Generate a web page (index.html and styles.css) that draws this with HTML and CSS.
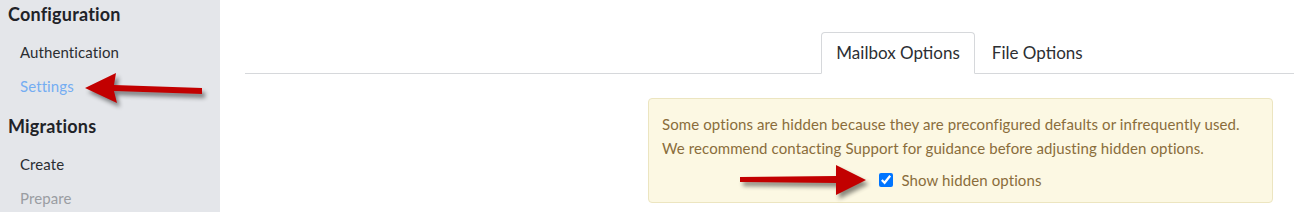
FILE: index.html
```
<html>

<head>
    <link rel="stylesheet" href="styles.css">
</head>

<body>
    <div class="page">
        <div class="sidebar">
            <div class="nav-head first">Configuration</div>
            <div class="nav-item">Authentication</div>
            <div class="nav-item active">Settings</div>
            <div class="nav-head">Migrations</div>
            <div class="nav-item">Create</div>
            <div class="nav-item muted">Prepare</div>
        </div>
        <div class="main">
            <div class="tabs">
                <div class="tab-group">
                    <div class="tab selected">Mailbox Options</div>
                    <div class="tab">File Options</div>
                </div>
            </div>
            <div class="content">
                <div class="alert">
                    <p>Some options are hidden because they are preconfigured defaults or infrequently used.</p>
                    <p>We recommend contacting Support for guidance before adjusting hidden options.</p>
                    <label class="check">
                        <input type="checkbox" checked>
                        <span>Show hidden options</span>
                    </label>
                </div>
            </div>
        </div>
    </div>
    <svg class="marks" width="1294" height="212" viewBox="0 0 1294 212">
        <polygon class="arrow" points="85,88 116,73 114,85 202,88 202,94 114,91 117,103" />
        <polygon class="arrow" points="866,180 836,165 836,176 740,177 740,182 836,183 836,195" />
    </svg>
</body>

</html>
```
FILE: styles.css
```
body {
    margin: 0;
    background: #fff;
    font-family: 'Lato', 'Open Sans', sans-serif;
    color: #333;
}

.page {
    display: flex;
    height: 212px;
    overflow: hidden;
}

.sidebar {
    width: 220px;
    flex-shrink: 0;
    background: #e4e6ea;
    padding-left: 8px;
    box-sizing: border-box;
}

.nav-head {
    font-size: 18px;
    font-weight: bold;
    color: #1f2328;
    line-height: 28px;
    margin: 9px 0 7px;
    letter-spacing: 0.2px;
}

.nav-head.first {
    margin-top: 0;
}

.nav-item {
    font-size: 15px;
    line-height: 34px;
    padding-left: 12px;
    color: #2a2d31;
    letter-spacing: 0.1px;
}

.nav-item.active {
    color: #74adf2;
}

.nav-item.muted {
    color: #9a9da2;
}

.main {
    flex: 1;
    padding-left: 25px;
}

.tabs {
    margin-top: 32px;
    border-bottom: 1px solid #d6d8db;
    display: grid;
    grid-template-columns: 1fr 625px 21px;
}

.tab-group {
    grid-column: 2;
    display: flex;
    justify-content: center;
}

.tab {
    font-size: 17px;
    line-height: 40px;
    padding: 0 14px;
    margin: 0 2px -1px 0;
    border: 1px solid transparent;
    border-radius: 4px 4px 0 0;
    color: #2c2f33;
}

.tab.selected {
    background: #fff;
    border-color: #d6d8db;
    border-bottom-color: #fff;
}

.content {
    display: grid;
    grid-template-columns: 1fr 625px 21px;
    margin-top: 24px;
}

.alert {
    grid-column: 2;
    background: #fcf8e3;
    border: 1px solid #ece5c0;
    border-radius: 4px;
    padding: 13px 13px 10px;
    color: #8a6d3b;
    font-size: 15px;
    line-height: 24px;
    letter-spacing: 0.1px;
}

.alert p {
    margin: 0;
}

.check {
    display: flex;
    justify-content: center;
    align-items: center;
    gap: 8px;
    margin-top: 8px;
}

.check input {
    margin: 0;
    width: 14px;
    height: 14px;
}

.marks {
    position: absolute;
    top: 0;
    left: 0;
    pointer-events: none;
}

.arrow {
    fill: #c20000;
    filter: drop-shadow(3px 4px 2px rgba(0, 0, 0, 0.45));
}
```
